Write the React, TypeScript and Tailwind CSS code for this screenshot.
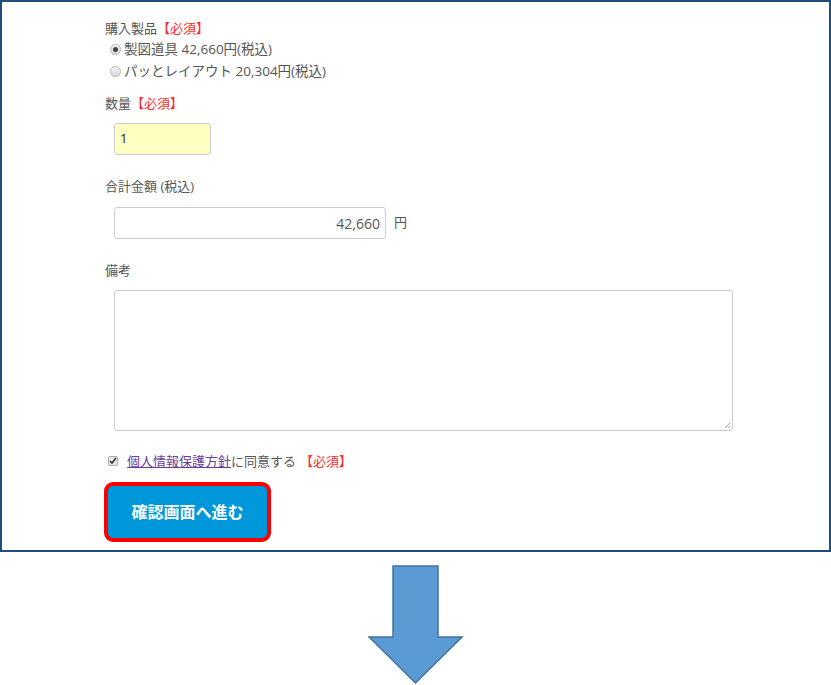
const font = { fontFamily: '"Open Sans", "Noto Sans CJK JP", sans-serif' };

const Required = () => <span className="text-[#ff2a2a]">【必須】</span>;

const Radio = ({ checked }: { checked?: boolean }) => (
  <span className="inline-flex w-[11px] h-[11px] rounded-full border border-[#b8b8b8] bg-gradient-to-b from-[#f4f4f4] to-[#d8d8d8] items-center justify-center mr-[3px]">
    {checked && <span className="w-[5px] h-[5px] rounded-full bg-[#444]" />}
  </span>
);

export default function App() {
  return (
    <div className="w-[831px] h-[685px] bg-white text-[13px] text-[#555]" style={font}>
      {/* form frame */}
      <div className="w-[831px] h-[552px] border-2 border-[#1f4e79] pl-[103px] pt-[16px]">
        <div className="leading-[20px]">
          購入製品<Required />
        </div>
        <div className="pl-[5px] leading-[22px] text-[13.5px]">
          <div className="flex items-center"><Radio checked />製図道具 42,660円(税込)</div>
          <div className="flex items-center"><Radio />パッとレイアウト 20,304円(税込)</div>
        </div>

        <div className="mt-[11px] leading-[20px]">
          数量<Required />
        </div>
        <div className="mt-[10px] ml-[9px] w-[97px] h-[32px] rounded-[3px] border border-[#ccc] bg-[#ffffc2] flex items-center px-[5px] text-[#222]">
          1
        </div>

        <div className="mt-[21px] leading-[20px]">合計金額 (税込)</div>
        <div className="mt-[11px] ml-[9px] flex items-center">
          <div className="w-[272px] h-[32px] rounded-[3px] border border-[#ccc] flex items-center justify-end px-[5px] text-[14px] text-[#555]">
            42,660
          </div>
          <span className="ml-[8px]">円</span>
        </div>

        <div className="mt-[21px] leading-[20px]">備考</div>
        <div className="mt-[10px] ml-[9px] relative w-[619px] h-[141px] rounded-[3px] border border-[#ccc]">
          <svg className="absolute right-[1px] bottom-[1px]" width="7" height="7" viewBox="0 0 7 7">
            <path d="M6 1 L1 6 M6 4 L4 6" stroke="#aaa" strokeWidth="1" />
          </svg>
        </div>

        <div className="mt-[20px] ml-[3px] flex items-center leading-[20px]">
          <span className="w-[10px] h-[10px] rounded-[2px] border border-[#aaa] bg-[#e8e8e8] flex items-center justify-center mr-[9px]">
            <svg width="8" height="8" viewBox="0 0 8 8">
              <path d="M1 4 L3 6 L7 1" stroke="#333" strokeWidth="1.6" fill="none" />
            </svg>
          </span>
          <a className="text-[#6a3d9a] underline">個人情報保護方針</a>に同意する
          <span className="ml-[4px]"><Required /></span>
        </div>

        <div className="mt-[11px] -ml-[1px] w-[167px] h-[60px] rounded-[9px] border-[4px] border-[#ff0000] bg-[#0098db] flex items-center justify-center text-white font-bold text-[16px]">
          確認画面へ進む
        </div>
      </div>

      {/* arrow */}
      <div className="flex justify-center pl-[1px] pt-[13px]">
        <svg width="96" height="120" viewBox="0 0 96 120">
          <path
            d="M25 1 L70 1 L70 72 L94 72 L47.5 118 L1 72 L25 72 Z"
            fill="#5b9bd5"
            stroke="#41719c"
            strokeWidth="1.5"
          />
        </svg>
      </div>
    </div>
  );
}
